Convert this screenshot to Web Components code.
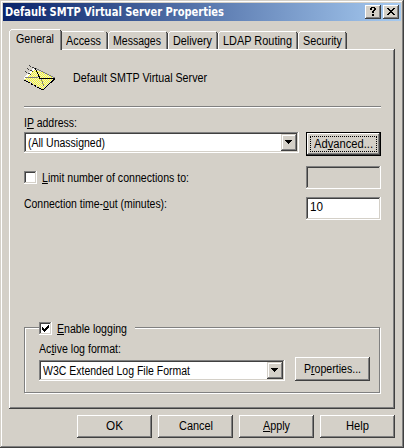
<!DOCTYPE html>
<html lang="en"><head><meta charset="utf-8"><title>Default SMTP Virtual Server Properties</title>
<style>
html,body{margin:0;padding:0;overflow:hidden;background:#d4d0c8}
body{font:12.5px/14px "Liberation Sans",Arial,sans-serif;color:#000}
u{text-decoration:underline;text-decoration-thickness:1px;text-underline-offset:1px;text-decoration-skip-ink:none}
.tabs{display:flex;align-items:flex-end;height:20px;padding-left:9px;margin-top:8px}
.row{display:flex;align-items:flex-start}
.footer{display:flex;gap:6px;padding:6px 0 0 77px}
</style></head><body>
<win-dialog>
<win-title slot="title"><fit-text w="219">Default SMTP Virtual Server Properties</fit-text></win-title>
<div class="tabs">
<win-tab active style="width:53px"><fit-text w="38">General</fit-text></win-tab>
<win-tab first style="width:46px"><fit-text w="35">Access</fit-text></win-tab>
<win-tab style="width:60px"><fit-text w="48">Messages</fit-text></win-tab>
<win-tab style="width:50px"><fit-text w="39">Delivery</fit-text></win-tab>
<win-tab style="width:80px"><fit-text w="69">LDAP Routing</fit-text></win-tab>
<win-tab style="width:49px"><fit-text w="39">Security</fit-text></win-tab>
</div>
<win-page>
<div class="row" style="height:26px;padding-top:15px"><mail-icon></mail-icon><fit-text w="134" style="margin:6px 0 0 16px">Default SMTP Virtual Server</fit-text></div>
<win-rule></win-rule>
<fit-text w="53" style="margin-top:8px">I<u>P</u> address:</fit-text>
<div class="row" style="gap:7px;margin-top:2px;height:34px"><win-combo style="width:275px"><fit-text w="77">(All Unassigned)</fit-text></win-combo><win-button focused style="height:24px"><fit-text w="59">Ad<u>v</u>anced...</fit-text></win-button></div>
<div class="row" style="height:31px"><win-check style="width:282px;padding-top:5px"><fit-text w="147"><u>L</u>imit number of connections to:</fit-text></win-check><win-field disabled></win-field></div>
<div class="row" style="height:130px"><fit-text w="143" style="margin-right:139px">Connection time-<u>o</u>ut (minutes):</fit-text><win-field><fit-text w="13">10</fit-text></win-field></div>
<win-group>
<win-check slot="legend" checked><fit-text w="70"><u>E</u>nable logging</fit-text></win-check>
<fit-text w="82">Ac<u>t</u>ive log format:</fit-text>
<div class="row" style="gap:10px;align-items:flex-end;margin-top:1px"><win-combo style="width:246px"><fit-text w="147">W3C Extended Log File Format</fit-text></win-combo><win-button style="height:24px;padding-top:5px"><fit-text w="57">P<u>r</u>operties...</fit-text></win-button></div>
</win-group>
</win-page>
<div class="footer">
<win-button><fit-text w="17">OK</fit-text></win-button>
<win-button><fit-text w="34">Cancel</fit-text></win-button>
<win-button><fit-text w="27"><u>A</u>pply</fit-text></win-button>
<win-button><fit-text w="23">Help</fit-text></win-button>
</div>
</win-dialog>
<script>
const RAISED='box-shadow:inset -1px -1px #404040,inset 1px 1px #fff,inset -2px -2px #808080;';
const SUNKEN='box-shadow:inset -1px -1px #fff,inset 1px 1px #808080,inset -2px -2px #d4d0c8,inset 2px 2px #404040;';
function define(name,css,html,ready){
  const t=document.createElement('template');
  t.innerHTML='<style>:host{box-sizing:border-box}*{box-sizing:border-box}'+css+'</style>'+html;
  customElements.define(name,class extends HTMLElement{
    constructor(){super();this.attachShadow({mode:'open'}).append(t.content.cloneNode(true));}
    connectedCallback(){if(ready)ready(this);}
  });
}
define('win-dialog',':host{display:block;width:404px;height:448px;padding:3px;background:#d4d0c8;box-shadow:inset -1px -1px #404040,inset 1px 1px #d4d0c8,inset -2px -2px #808080,inset 2px 2px #fff}.body{margin-left:-3px}','<slot name="title"></slot><div class="body"><slot></slot></div>');
define('win-title',':host{display:flex;height:18px;align-items:flex-start;padding:2px 2px 0 2px;background:linear-gradient(90deg,#0a246a,#a6caf0);color:#fff;font:bold 11.5px/14px "DejaVu Sans Condensed","Noto Sans",sans-serif}::slotted(*){margin-top:0}.c{margin-left:auto;display:flex;gap:2px}.b{width:16px;height:14px;background:#d4d0c8;'+RAISED+'}svg{display:block}',
 '<slot></slot><div class="c"><div class="b"><svg width="16" height="14" shape-rendering="crispEdges"><path d="M5 3h1v-1h4v1h1v2h-1v1h-1v2h-2v-2h1v-1h1v-2h-2v2h-2zM7 9h2v2h-2z"/></svg></div><div class="b"><svg width="16" height="14" shape-rendering="crispEdges"><path d="M4 3h2v1h1v1h2v-1h1v-1h2v1h-1v1h-1v1h-1v1h1v1h1v1h1v1h-2v-1h-1v-1h-2v1h-1v1h-2v-1h1v-1h1v-1h1v-1h-1v-1h-1v-1h-1z"/></svg></div></div>');
define('win-tab',':host{display:block;height:18px;padding:3px 0 0 5px;background:linear-gradient(#808080,#808080) right 1px top 2px/1px 100% no-repeat,linear-gradient(#404040,#404040) right 0 top 2px/1px 100% no-repeat,linear-gradient(#fff,#fff) 2px 0/calc(100% - 4px) 1px no-repeat,linear-gradient(#fff,#fff) 0 2px/1px 100% no-repeat,linear-gradient(#fff,#fff) 1px 1px/1px 1px no-repeat,linear-gradient(#404040,#404040) right 1px top 1px/1px 1px no-repeat}:host([active]){height:21px;margin-bottom:-1px;padding:3px 0 0 7px;position:relative;background-color:#d4d0c8}:host([first]){padding-left:4px;background-position:right 1px top 2px,right 0 top 2px,0 0,-9px 2px,-9px 1px,right 1px top 1px}','<slot></slot>');
define('win-page',':host{display:block;width:386px;height:360px;margin-left:9px;padding:1px 13px 0 15px;box-shadow:inset -1px -1px #404040,inset 1px 1px #fff,inset -2px -2px #808080}','<slot></slot>');
define('win-rule',':host{display:block;width:357px;height:2px;margin-top:15px;border-top:1px solid #808080;border-bottom:1px solid #fff}','');
define('win-button',':host{display:block;flex:none;width:75px;height:23px;padding:4px 0 0;'+RAISED+'}:host([focused]){padding:0;border:1px solid #000}::slotted(*){margin:0 auto}.f{display:contents}:host([focused]) .f{display:block;margin:3px;height:16px;border:1px dotted #000}','<div class="f"><slot></slot></div>');
define('win-combo',':host{display:flex;flex:none;height:21px;padding:2px;background:#fff;'+SUNKEN+'}.t{flex:1;padding:2px 0 0 2px}.a{width:16px;height:17px;background:#d4d0c8;box-shadow:inset -1px -1px #404040,inset 1px 1px #d4d0c8,inset -2px -2px #808080,inset 2px 2px #fff}svg{display:block}','<div class="t"><slot></slot></div><div class="a"><svg width="16" height="17" shape-rendering="crispEdges"><path d="M4 6h7v1h-1v1h-1v1h-1v1h-1v-1h-1v-1h-1v-1h-1z"/></svg></div>');
define('win-field',':host{display:block;flex:none;width:75px;height:23px;padding:3px 4px;background:#fff;'+SUNKEN+'}:host([disabled]){background:#d4d0c8}','<slot></slot>');
define('win-check',':host{display:flex;gap:5px}.b{width:13px;height:13px;background:#fff;'+SUNKEN+'}svg{display:none}:host([checked]) svg{display:block}','<div class="b"><svg width="13" height="13" shape-rendering="crispEdges"><path d="M3 5h1v1h1v1h1v-1h1v-1h1v-1h1v-1h1v3h-1v1h-1v1h-1v1h-1v1h-1v-1h-1v-1h-1z"/></svg></div><slot></slot>');
define('win-group',':host{display:block;width:356px;height:66px;border:1px solid #808080;box-shadow:inset 1px 1px #fff,1px 1px #fff;padding:0 0 0 14px}.l{width:96px;height:20px;margin-top:-6px}.l ::slotted(*){background:#d4d0c8}','<div class="l"><slot name="legend"></slot></div><slot></slot>');
define('mail-icon',':host{display:block;width:33px;height:32px}','<svg width="33" height="32" shape-rendering="crispEdges"><defs><pattern id="p" width="2" height="2" patternUnits="userSpaceOnUse"><path fill="#ffff20" d="M0 0h2v2H0z"/><path fill="#e4e4e4" d="M0 0h1v1H0zM1 1h1v1H1z"/></pattern></defs><path d="M11 4L31 13L19 24L0 14z" fill="url(#p)"/><g fill="none"><path d="M10 4L0 14" stroke="#fff" stroke-width="2"/><path d="M11 3L31 13M1 12.5H14M17 14L20 21" stroke="#808080"/><path d="M31 13.5H16L11 3M19 25L31 13.5" stroke="#000"/><path d="M0 15L19 25" stroke="#000" stroke-dasharray="3 .7"/><path d="M5 .5L11 3.5M3 3.5L9 6.5M1 6.5L7 9.5" stroke="#404040" stroke-dasharray="2 1"/></g></svg>');
define('fit-text',':host{display:block;white-space:nowrap;flex:none}span{display:inline-block;transform-origin:0 0}','<span><slot></slot></span>',el=>{
  const s=el.shadowRoot.querySelector('span'),w=s.getBoundingClientRect().width,target=+el.getAttribute('w');
  el.style.width=target+'px';el.style.height='14px';
  s.style.transform='scaleX('+target/w+')';
});
</script></body></html>
